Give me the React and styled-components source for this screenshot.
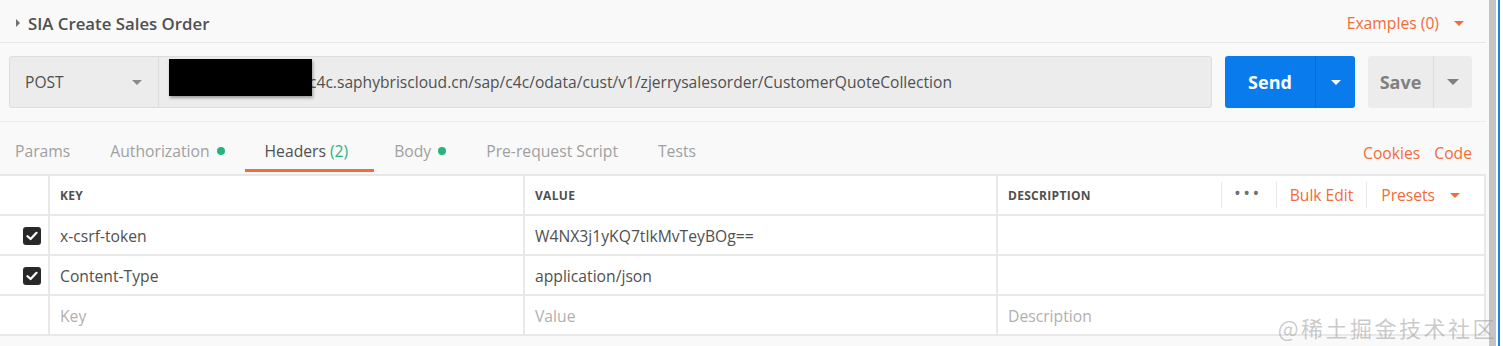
import React from 'react'
import styled, { createGlobalStyle } from 'styled-components'

const GlobalStyle = createGlobalStyle`
  html, body {
    margin: 0;
    padding: 0;
    background: #f9f9f9;
    font-family: "Open Sans", "Noto Sans", sans-serif;
    overflow: hidden;
  }
`

const ORANGE = '#f26b3a'
const GREEN = '#26b47f'
const BORDER = '#e8e8e8'

const Page = styled.div`
  position: relative;
  display: flex;
  width: 1503px;
  height: 346px;
  background: #f9f9f9;
`

const Main = styled.div`
  flex: 1;
  display: flex;
  flex-direction: column;
  min-width: 0;
`

const ScrollTrack = styled.div`
  width: 17px;
  display: flex;
  background: #ffffff;
  border-left: 3px solid #f9f9f9;
  box-sizing: border-box;
`

const ScrollThumb = styled.div`
  width: 7px;
  background: #c4c4c4;
`

const ScrollEdge = styled.div`
  width: 2px;
  margin-left: 2px;
  background: #1e80e0;
`

const TitleBar = styled.div`
  height: 43px;
  box-sizing: border-box;
  display: flex;
  align-items: center;
  justify-content: space-between;
  padding: 4px 22px 0 16px;
  border-bottom: 1px solid #e6e6e6;
`

const Title = styled.div`
  display: flex;
  align-items: center;
  gap: 8px;
  font-size: 16.8px;
  font-weight: 600;
  color: #505050;
`

const Caret = styled.span`
  width: 0;
  height: 0;
  border-top: ${p => p.size || 5}px solid transparent;
  border-bottom: ${p => p.size || 5}px solid transparent;
  border-left: ${p => p.size || 5}px solid #707070;
`

const DownCaret = styled.span`
  display: inline-block;
  width: 0;
  height: 0;
  border-left: ${p => p.size || 5}px solid transparent;
  border-right: ${p => p.size || 5}px solid transparent;
  border-top: ${p => p.size || 5}px solid ${p => p.color || '#707070'};
`

const OrangeLink = styled.span`
  display: inline-flex;
  align-items: center;
  gap: ${p => p.gap || 0}px;
  color: ${ORANGE};
  font-size: 15.7px;
`

const UrlRow = styled.div`
  display: flex;
  align-items: stretch;
  gap: 13px;
  height: 52px;
  padding: 13px 14px 13px 9px;
  border-bottom: 1px solid #ececec;
`

const RequestBox = styled.div`
  flex: 1;
  display: flex;
  background: #ececec;
  border: 1px solid #dcdcdc;
  border-radius: 3px;
  min-width: 0;
`

const Method = styled.div`
  width: 149px;
  display: flex;
  align-items: center;
  justify-content: space-between;
  padding: 0 16px 0 15px;
  box-sizing: border-box;
  border-right: 1px solid #dcdcdc;
  font-size: 15.6px;
  color: #505050;
`

const UrlField = styled.div`
  position: relative;
  flex: 1;
  display: flex;
  align-items: center;
  padding-left: 150px;
  font-size: 15.6px;
  color: #505050;
  white-space: nowrap;
  overflow: hidden;
`

const Redaction = styled.div`
  position: absolute;
  left: 10px;
  top: 2px;
  width: 143px;
  height: 37px;
  background: #000;
  box-shadow: 1px 2px 3px rgba(0, 0, 0, 0.35);
`

const SplitButton = styled.div`
  width: ${p => p.width}px;
  display: flex;
  border-radius: 3px;
  background: ${p => p.primary ? '#097bed' : '#ececec'};
  color: ${p => p.primary ? '#ffffff' : '#808080'};
  font-size: 18px;
  font-weight: 700;
`

const ButtonMain = styled.div`
  flex: 1;
  display: flex;
  align-items: center;
  justify-content: center;
  border-right: 1px solid ${p => p.primary ? '#0a6cd0' : '#dcdcdc'};
`

const ButtonArrow = styled.div`
  width: ${p => p.width}px;
  display: flex;
  align-items: center;
  justify-content: center;
`

const TabBar = styled.div`
  display: flex;
  align-items: stretch;
  justify-content: space-between;
  height: 52px;
  padding-right: 14px;
`

const Tabs = styled.div`
  display: flex;
  align-items: stretch;
`

const Tab = styled.div`
  display: flex;
  align-items: center;
  gap: 7px;
  padding: 11px ${p => p.active ? 26 : 20}px 0 20px;
  margin-bottom: 2px;
  font-size: 15.7px;
  color: ${p => p.active ? '#505050' : '#a0a0a0'};
  border-bottom: 3px solid ${p => p.active ? ORANGE : 'transparent'};
  box-sizing: border-box;
  &:first-child {
    padding-left: 15px;
  }
`

const Count = styled.span`
  color: ${GREEN};
  margin-left: -3px;
`

const Dot = styled.span`
  width: 8px;
  height: 8px;
  border-radius: 50%;
  background: ${GREEN};
`

const TabLinks = styled.div`
  display: flex;
  align-items: center;
  gap: 14px;
  padding-top: 9px;
`

const Table = styled.div`
  display: grid;
  grid-template-columns: 50px 475px 473px 1fr;
  width: 1486px;
  border-top: 2px solid ${BORDER};
  background: #ffffff;
`

const Cell = styled.div`
  height: 38px;
  display: flex;
  align-items: center;
  padding-left: ${p => p.pad ?? 10}px;
  padding-top: ${p => p.head ? 0 : 1}px;
  box-sizing: border-box;
  height: 40px;
  border-bottom: 2px solid ${BORDER};
  border-right: 2px solid ${BORDER};
  font-size: ${p => p.head ? 12 : 15.7}px;
  font-weight: ${p => p.head ? 700 : 400};
  letter-spacing: ${p => p.head ? '0.3px' : '0'};
  color: ${p => p.placeholder ? '#b0b0b0' : '#505050'};
  white-space: nowrap;
`

const HeadCell = styled(Cell)`
  justify-content: space-between;
  padding-right: 24px;
`

const CheckCell = styled(Cell)`
  justify-content: flex-end;
  padding-right: 7px;
  padding-left: 0;
`

const CheckBox = styled.span`
  width: 18px;
  height: 18px;
  border-radius: 3px;
  background: #282828;
  display: flex;
  align-items: center;
  justify-content: center;
`

const HeadTools = styled.div`
  display: flex;
  align-items: center;
  height: 26px;
  font-size: 15.6px;
  font-weight: 400;
  letter-spacing: 0;
`

const Tool = styled.div`
  display: flex;
  align-items: center;
  gap: 15px;
  height: 100%;
  padding: 0 ${p => p.pr ?? 13}px 0 ${p => p.pl ?? 13}px;
  border-left: ${p => p.sep ? `1px solid ${BORDER}` : 'none'};
  color: ${ORANGE};
`

const Dots = styled.span`
  font-size: 18px;
  letter-spacing: 2.5px;
  line-height: 1;
  margin-top: -5px;
  color: #707070;
`

const Watermark = styled.div`
  position: absolute;
  right: 6px;
  bottom: 3px;
  font-size: 22px;
  color: rgba(150, 150, 150, 0.5);
  font-family: "Noto Sans CJK SC", "Noto Sans", sans-serif;
  letter-spacing: 2.5px;
`

const Check = () => (
  <CheckBox>
    <svg width="12" height="10" viewBox="0 0 12 10">
      <polyline points="1.5,5.2 4.6,8 10.5,1.8" fill="none" stroke="#fff" strokeWidth="2.2" strokeLinecap="round" strokeLinejoin="round" />
    </svg>
  </CheckBox>
)

const rows = [
  { key: 'x-csrf-token', value: 'W4NX3j1yKQ7tlkMvTeyBOg==' },
  { key: 'Content-Type', value: 'application/json' }
]

const App = () => {
  return (
    <Page>
      <GlobalStyle />
      <Main>
        <TitleBar>
          <Title>
            <Caret size={4} />
            SIA Create Sales Order
          </Title>
          <OrangeLink gap={15}>
            Examples (0)
            <DownCaret size={5} color={ORANGE} />
          </OrangeLink>
        </TitleBar>

        <UrlRow>
          <RequestBox>
            <Method>
              POST
              <DownCaret size={5} color="#8a8a8a" />
            </Method>
            <UrlField>
              <Redaction />
              c4c.saphybriscloud.cn/sap/c4c/odata/cust/v1/zjerrysalesorder/CustomerQuoteCollection
            </UrlField>
          </RequestBox>
          <SplitButton primary width={130}>
            <ButtonMain primary>Send</ButtonMain>
            <ButtonArrow width={39}><DownCaret size={5} color="#ffffff" /></ButtonArrow>
          </SplitButton>
          <SplitButton width={104}>
            <ButtonMain>Save</ButtonMain>
            <ButtonArrow width={38}><DownCaret size={6} color="#808080" /></ButtonArrow>
          </SplitButton>
        </UrlRow>

        <TabBar>
          <Tabs>
            <Tab>Params</Tab>
            <Tab>Authorization <Dot /></Tab>
            <Tab active>Headers <Count>(2)</Count></Tab>
            <Tab>Body <Dot /></Tab>
            <Tab>Pre-request Script</Tab>
            <Tab>Tests</Tab>
          </Tabs>
          <TabLinks>
            <OrangeLink>Cookies</OrangeLink>
            <OrangeLink>Code</OrangeLink>
          </TabLinks>
        </TabBar>

        <Table>
          <Cell pad={0} />
          <Cell head>KEY</Cell>
          <Cell head>VALUE</Cell>
          <HeadCell head>
            DESCRIPTION
            <HeadTools>
              <Tool sep pl={12} pr={14}><Dots>•••</Dots></Tool>
              <Tool sep>Bulk Edit</Tool>
              <Tool sep pl={14} pr={0}>Presets <DownCaret size={5} color={ORANGE} /></Tool>
            </HeadTools>
          </HeadCell>

          {rows.map(r => (
            <React.Fragment key={r.key}>
              <CheckCell><Check /></CheckCell>
              <Cell>{r.key}</Cell>
              <Cell>{r.value}</Cell>
              <Cell />
            </React.Fragment>
          ))}

          <Cell pad={0} />
          <Cell placeholder>Key</Cell>
          <Cell placeholder>Value</Cell>
          <Cell placeholder>Description</Cell>
        </Table>
      </Main>
      <ScrollTrack>
        <ScrollThumb />
        <ScrollEdge />
      </ScrollTrack>
      <Watermark>@稀土掘金技术社区</Watermark>
    </Page>
  )
}

export default App
